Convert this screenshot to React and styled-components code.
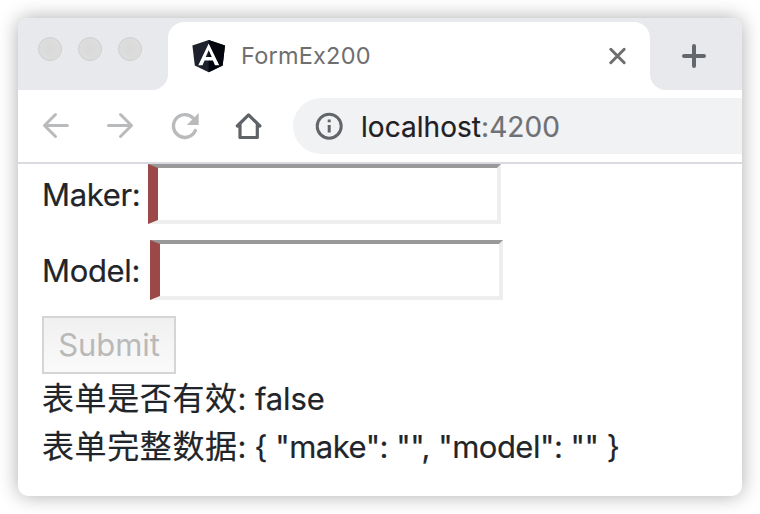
import React from "react";
import styled, { createGlobalStyle } from "styled-components";

const GlobalStyle = createGlobalStyle`
  * { box-sizing: border-box; }
  body {
    margin: 0;
    background: #fff;
    overflow: hidden;
    font-family: Inter, "Noto Sans CJK SC", sans-serif;
  }
`;

const Desktop = styled.div`
  width: 760px;
  height: 514px;
  padding: 18px;
  overflow: hidden;
`;

const BrowserWindow = styled.div`
  width: 724px;
  height: 478px;
  border-radius: 10px;
  background: #fff;
  overflow: hidden;
  box-shadow: 0 0 20px rgba(0, 0, 0, 0.33);
`;

const TabStrip = styled.div`
  display: flex;
  align-items: flex-end;
  height: 72px;
  background: #e8e9ed;
`;

const TrafficLights = styled.div`
  display: flex;
  gap: 16px;
  width: 150px;
  height: 72px;
  padding: 19px 0 0 20px;
`;

const Light = styled.span`
  width: 24px;
  height: 24px;
  border: 1px solid #cfcfcf;
  border-radius: 50%;
  background: radial-gradient(#d9d9d9, #dfdfdf);
`;

const Tab = styled.div`
  position: relative;
  display: flex;
  align-items: center;
  width: 482px;
  height: 68px;
  padding: 0 23px 0 24px;
  border-radius: 16px 16px 0 0;
  background: #fff;

  &::before,
  &::after {
    content: "";
    position: absolute;
    bottom: 0;
    width: 16px;
    height: 16px;
  }
  &::before {
    left: -16px;
    background: radial-gradient(circle at 0 0, transparent 15.5px, #fff 16.5px);
  }
  &::after {
    right: -16px;
    background: radial-gradient(circle at 100% 0, transparent 15.5px, #fff 16.5px);
  }
`;

const TabTitle = styled.span`
  flex: 1;
  margin-left: 15px;
  color: #6f6f70;
  font-size: 23.5px;
  line-height: 30px;
  letter-spacing: 0.22px;
`;

const NewTab = styled.div`
  width: 92px;
  height: 72px;
  padding: 25px 0 0 31px;
`;

const Icon = styled.svg`
  display: block;
  flex: none;
  fill: none;
  stroke: ${(p) => p.$color};
  stroke-width: ${(p) => p.$weight || 3};
  stroke-linecap: round;
  stroke-linejoin: round;
`;

const Toolbar = styled.div`
  display: flex;
  align-items: center;
  height: 74px;
  padding-left: 22px;
  border-bottom: 2px solid #dadbe0;
`;

const NavButtons = styled.div`
  display: flex;
  gap: 32px;
  width: 253px;
`;

const AddressBar = styled.div`
  display: flex;
  align-items: center;
  flex: 1;
  height: 56px;
  padding-left: 21px;
  border-radius: 28px 0 0 28px;
  background: #f1f2f4;
`;

const Address = styled.span`
  margin-left: 17px;
  padding-top: 1px;
  color: #1f2023;
  font-size: 28px;
  line-height: 36px;
  letter-spacing: 0.05px;
  -webkit-text-stroke: 0.2px;
`;

const Port = styled.span`
  color: #6e7073;
`;

const Form = styled.form`
  padding-left: 24px;
  color: #212529;
  font-size: 31px;
  line-height: 48px;
`;

const Field = styled.label`
  display: flex;
  align-items: center;
  height: 60px;
  margin-bottom: 16px;
`;

const FieldName = styled.span`
  width: ${(p) => p.$width}px;
  padding-top: 2px;
  letter-spacing: -0.35px;
  white-space: nowrap;
  -webkit-text-stroke: 0.2px;
`;

const TextInput = styled.input`
  width: 353px;
  height: 60px;
  padding: 0 4px;
  border: 4px solid;
  border-left-width: 10px;
  border-color: #999 #eee #eee #9d4848;
  border-radius: 0;
  outline: none;
  background: #fff;
  font: inherit;
`;

const SubmitButton = styled.button`
  display: block;
  width: 134px;
  height: 58px;
  margin-bottom: -2px;
  padding: 0;
  border: 2px solid #d5d5d5;
  background: linear-gradient(#f0f0f0, #fafafa);
  color: #b9b9b9;
  font: inherit;
  letter-spacing: -0.1px;
`;

const Status = styled.div`
  height: 48px;
  white-space: pre;
  letter-spacing: ${(p) => p.$spacing}px;
  -webkit-text-stroke: 0.2px;
`;

const Chinese = styled.span`
  font-family: "Noto Sans CJK SC", sans-serif;
  font-size: 32px;
  letter-spacing: 0.6px;
`;

const AngularLogo = () => (
  <Icon width="34" height="34" viewBox="0 0 34 34" stroke="none" $color="none">
    <path fill="#1d222c" d="M16.7 1 33 6.5 30.7 26.5 16.7 33.2 2.8 26.5.4 6.5Z" />
    <path fill="#03060e" d="M16.7 1 33 6.5 30.7 26.5 16.7 33.2Z" />
    <path fill="#fff" fillRule="evenodd" d="M16.7 4.5 6.3 26.2h4.2l2.1-4.7h8.3l2.1 4.7h4.2ZM16.7 11.2l3 6.7h-6Z" />
  </Icon>
);

export default function App() {
  return (
    <>
      <GlobalStyle />
      <Desktop>
        <BrowserWindow>
          <TabStrip>
            <TrafficLights>
              <Light />
              <Light />
              <Light />
            </TrafficLights>
            <Tab>
              <AngularLogo />
              <TabTitle>FormEx200</TabTitle>
              <Icon width="19" height="19" viewBox="0 0 19 19" $color="#6d6e70">
                <path d="M2.8 2.3 16.2 15.7M16.2 2.3 2.8 15.7" />
              </Icon>
            </Tab>
            <NewTab>
              <Icon width="26" height="26" viewBox="0 0 26 26" $color="#64676b" $weight={4}>
                <path d="M13 3v20M3 13h20" />
              </Icon>
            </NewTab>
          </TabStrip>
          <Toolbar>
            <NavButtons>
              <Icon width="32" height="32" viewBox="0 0 32 32" $color="#b8babc">
                <path d="M27.3 15.5H5M15.5 4.5 4.5 15.5l11 11" />
              </Icon>
              <Icon width="32" height="32" viewBox="0 0 32 32" $color="#b8babc">
                <path d="M4.5 15.5h22.5M16.5 4.5l11 11-11 11" />
              </Icon>
              <Icon width="32" height="32" viewBox="0 0 32 32" $color="#b8babc" $weight={3.4}>
                <path d="M27.3 20.6A11.4 11.4 0 1 1 25.2 8.2" />
                <path d="M30.7 3v12H18.8Z" fill="#b8babc" stroke="none" />
              </Icon>
              <Icon width="32" height="32" viewBox="0 0 32 32" $color="#5f6267" $weight={3.2}>
                <path d="M5.3 16 16.6 4.9 27.9 16M8 14.5v13h17.3v-13" />
              </Icon>
            </NavButtons>
            <AddressBar>
              <Icon width="30" height="30" viewBox="0 0 30 30" $color="#626569">
                <circle cx="15.2" cy="15.2" r="12" />
                <path d="M15.2 14v7.5M15.2 8.5v2.8" strokeLinecap="butt" />
              </Icon>
              <Address>
                localhost<Port>:4200</Port>
              </Address>
            </AddressBar>
          </Toolbar>
          <Form>
            <Field>
              <FieldName $width={106}>Maker:</FieldName>
              <TextInput />
            </Field>
            <Field>
              <FieldName $width={108}>Model:</FieldName>
              <TextInput />
            </Field>
            <SubmitButton type="button" disabled>Submit</SubmitButton>
            <Status $spacing={-0.15}>
              <Chinese>表单是否有效</Chinese>: false
            </Status>
            <Status $spacing={-0.5}>
              <Chinese>表单完整数据</Chinese>{': { "make": "", "model": "" }'}
            </Status>
          </Form>
        </BrowserWindow>
      </Desktop>
    </>
  );
}
